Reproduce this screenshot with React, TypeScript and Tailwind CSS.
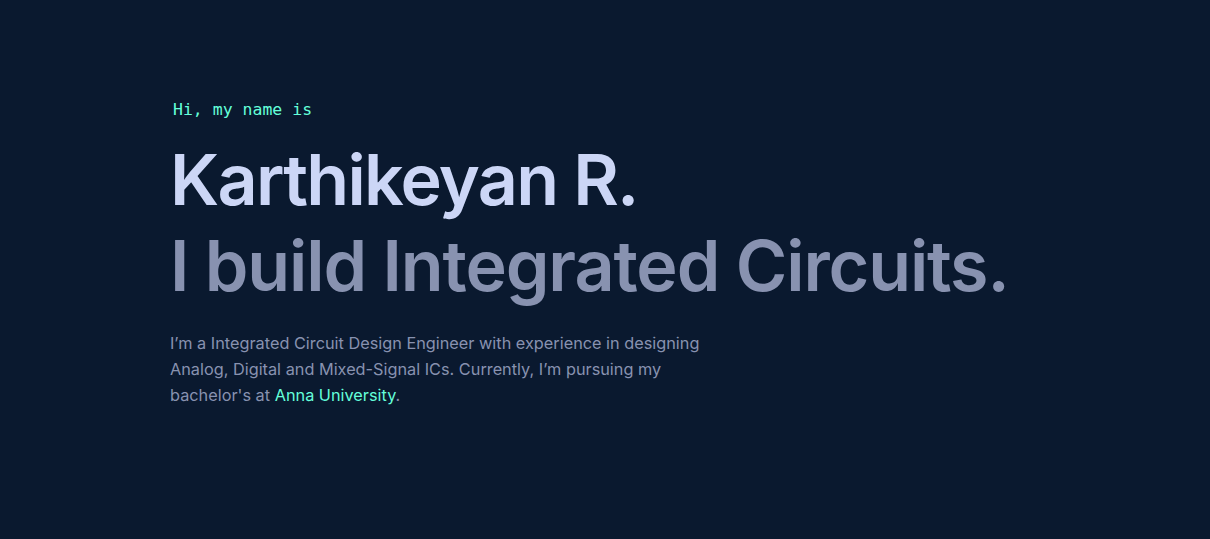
export default function App() {
	return (
		<main className="min-h-screen w-full bg-[#0a192f]">
			<section className="flex flex-col items-start pl-[170px] pt-[100px]">
				<h1 className="ml-[3px] mb-[17px] font-['DejaVu_Sans_Mono',monospace] text-[16.5px] leading-[20px] text-[#64ffda]">
					Hi, my name is
				</h1>
				<h2 className="font-['Inter',sans-serif] text-[70px] font-semibold leading-[86px] tracking-[-0.025em] text-[#ccd6f6]">
					Karthikeyan R.
				</h2>
				<h3 className="font-['Inter',sans-serif] text-[70px] font-semibold leading-[86px] tracking-[-0.016em] text-[#8892b0]">
					I build Integrated Circuits.
				</h3>
				<p className="mt-[21px] max-w-[545px] font-['Inter',sans-serif] text-[16.3px] leading-[26px] text-[#8892b0]">
					I’m a Integrated Circuit Design Engineer with experience in designing Analog, Digital and Mixed-Signal ICs. Currently, I’m pursuing my bachelor's at{" "}
					<span className="text-[#64ffda]">Anna University</span>.
				</p>
			</section>
		</main>
	);
}
